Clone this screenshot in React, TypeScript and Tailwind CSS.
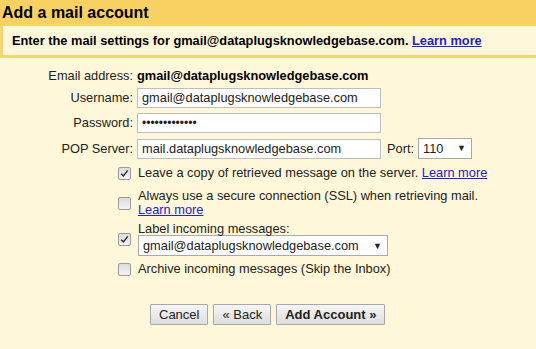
import { ReactNode } from "react";

function Check({ checked }: { checked?: boolean }) {
  return (
    <span className="inline-flex h-[13px] w-[13px] shrink-0 items-center justify-center rounded-[2px] border border-[#9a9a9a] bg-gradient-to-b from-[#dcdcdc] to-[#f4f4f4]">
      {checked && (
        <svg viewBox="0 0 13 13" className="h-[11px] w-[11px]">
          <path d="M2.5 6.8 L5.2 9.3 L10.4 2.8" fill="none" stroke="#333" strokeWidth="1.8" />
        </svg>
      )}
    </span>
  );
}

function Field({ children, w }: { children?: ReactNode; w: string }) {
  return (
    <div className={`flex h-[20px] items-center border border-[#bdbdbd] bg-white px-[4px] ${w}`}>
      {children}
    </div>
  );
}

function Select({ value, w }: { value: string; w: string }) {
  return (
    <div className={`flex h-[21px] items-center justify-between border border-[#a9a9a9] bg-white pl-[4px] pr-[5px] ${w}`}>
      <span>{value}</span>
      <span className="text-[9px]">▼</span>
    </div>
  );
}

function Btn({ children, bold }: { children: ReactNode; bold?: boolean }) {
  return (
    <button
      type="button"
      className={`h-[21px] rounded-[1px] border border-[#a8a8a8] bg-gradient-to-b from-[#f6f6f6] to-[#dedede] px-[8px] text-[13px] leading-none text-[#222] ${bold ? "font-bold" : ""}`}
    >
      {children}
    </button>
  );
}

export default function App() {
  const link = "text-[#2222cc] underline";
  return (
    <div className="h-[349px] w-[536px] overflow-hidden bg-[#fff7d9] font-['Liberation_Sans',Arial,sans-serif] text-[12.8px] text-[#222]">
      <div className="flex h-[26px] items-center bg-[#f9d163] pl-[2px] text-[16px] font-bold text-black">
        Add a mail account
      </div>
      <div className="border-b-[3px] border-l-[3px] border-[#f7d577] bg-[#fff7da]">
        <div className="flex h-[29px] items-center pl-[9px] font-bold text-black">
          Enter the mail settings for gmail@dataplugsknowledgebase.com.&nbsp;
          <a className={link}>Learn more</a>
        </div>
      </div>

      <div className="mt-[11px] grid grid-cols-[133px_auto] items-center gap-x-[4px] gap-y-[5px]">
        <div className="h-[14px] text-right leading-[14px]">Email address:</div>
        <div className="font-bold leading-[14px] text-black">gmail@dataplugsknowledgebase.com</div>
        <div className="text-right">Username:</div>
        <Field w="w-[244px]">gmail@dataplugsknowledgebase.com</Field>
        <div className="text-right">Password:</div>
        <Field w="w-[244px]">
          <span className="text-[12px] leading-none">•••••••••••••</span>
        </Field>
        <div className="text-right">POP Server:</div>
        <div className="flex items-center">
          <Field w="w-[244px]">mail.dataplugsknowledgebase.com</Field>
          <span className="ml-[6px] mr-[4px]">Port:</span>
          <Select value="110" w="w-[54px]" />
        </div>
      </div>

      <div className="mt-[7px] flex flex-col pl-[118px] leading-[14px]">
        <div className="flex items-center gap-[7px]">
          <Check checked />
          <span>
            Leave a copy of retrieved message on the server. <a className={link}>Learn more</a>
          </span>
        </div>
        <div className="mt-[9px] flex items-center gap-[7px]">
          <Check />
          <div>
            <div>Always use a secure connection (SSL) when retrieving mail.</div>
            <a className={link}>Learn more</a>
          </div>
        </div>
        <div className="mt-[5px] flex items-center gap-[7px]">
          <Check checked />
          <div>
            <div className="leading-[13px]">Label incoming messages:</div>
            <Select value="gmail@dataplugsknowledgebase.com" w="w-[250px]" />
          </div>
        </div>
        <div className="mt-[6px] flex items-center gap-[7px]">
          <Check />
          <span>Archive incoming messages (Skip the Inbox)</span>
        </div>
      </div>

      <div className="mt-[28px] flex gap-[5px] pl-[150px]">
        <Btn>Cancel</Btn>
        <Btn>« Back</Btn>
        <Btn bold>Add Account »</Btn>
      </div>
    </div>
  );
}
